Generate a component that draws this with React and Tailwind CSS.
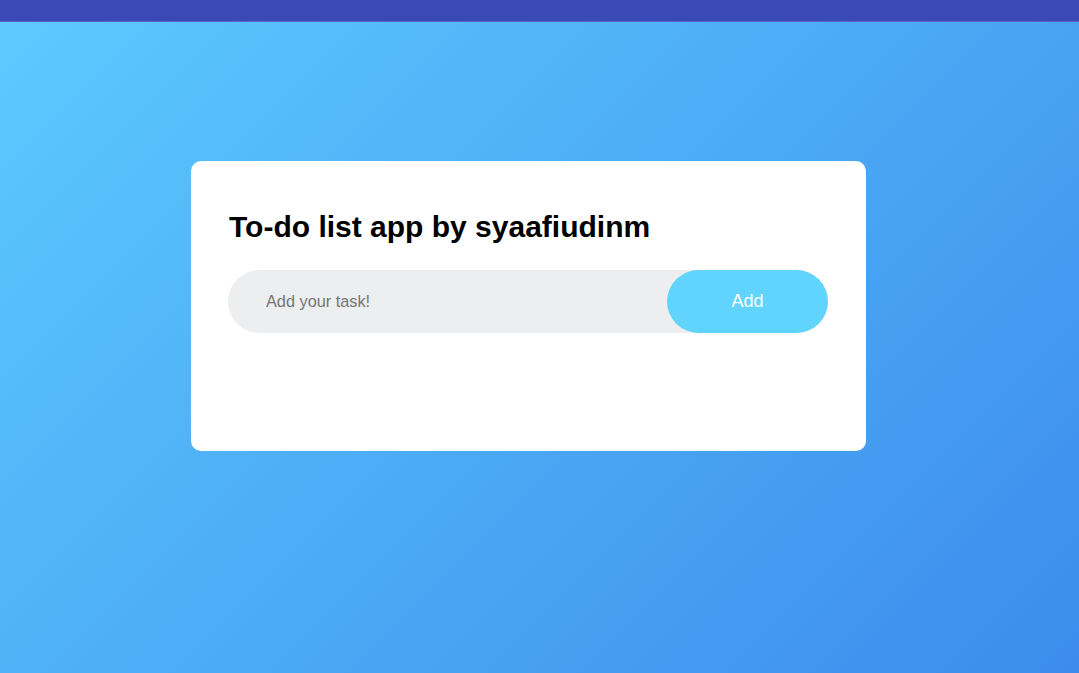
export default function App() {
  return (
    <div className="w-full h-[673px] flex flex-col overflow-hidden" style={{ fontFamily: '"Liberation Sans", Arial, sans-serif' }}>
      <div className="h-[22px] shrink-0 bg-[#3b49b7] border-b border-[#5a62c4]" />
      <div className="flex-1 bg-[linear-gradient(135deg,#5bc9fe,#3d8cec)] flex justify-start">
        <div className="mt-[139px] ml-[191px] w-[675px] h-[290px] bg-white rounded-[10px] pt-[49px] pl-[37px] pr-[38px]">
          <h2 className="text-[30px] leading-[34px] font-bold text-black pl-[1px]">To-do list app by syaafiudinm</h2>
          <div className="mt-[26px] h-[63px] flex items-center bg-[#edeef0] rounded-full">
            <input
              className="flex-1 h-full bg-transparent outline-none pl-[38px] text-[16.3px] text-[#333] placeholder:text-[#757575]"
              placeholder="Add your task!"
            />
            <button className="w-[161px] h-full rounded-full bg-[#61d4fe] text-white text-[18px]">Add</button>
          </div>
        </div>
      </div>
    </div>
  );
}
